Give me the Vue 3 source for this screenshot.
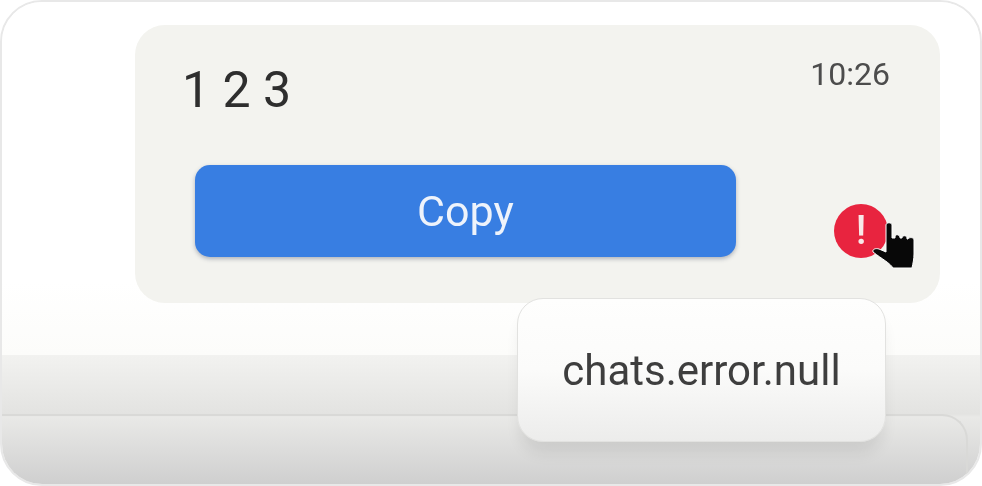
<template>
  <div class="frame">
    <section class="chat">
      <div class="bubble">
        <div class="head">
          <span class="message">1 2 3</span>
          <span class="time">10:26</span>
        </div>
        <div class="actions">
          <button class="copy">Copy</button>
          <span class="error">!</span>
        </div>
        <svg class="cursor" width="50" height="54" viewBox="0 0 50 54">
          <path d="M16 6c0-3 6-3 6 0v13h3v-1c0-3 4-3 5 0v1h2c0-3 5-3 5 0v1h1c1-2 6-2 6 1v14c0 5-1 9-2 14H23c-3-5-11-9-20-16-1-3 3-4 6-3l7 3z" fill="#080808" stroke="#fff" stroke-width="1" />
        </svg>
      </div>
    </section>
    <section class="composer">
      <div class="input"></div>
    </section>
    <div class="tooltip"><span class="tip-text">chats.error.null</span></div>
  </div>
</template>

<script setup>
</script>

<style>
html,
body {
  background: #fff;
}
</style>

<style scoped>
.frame {
  position: relative;
  box-sizing: border-box;
  width: 982px;
  height: 486px;
  display: flex;
  flex-direction: column;
  overflow: hidden;
  border: 2px solid #e8e8e8;
  border-radius: 42px;
  font-family: Roboto, "Liberation Sans", sans-serif;
}

.chat {
  box-sizing: border-box;
  height: 353px;
  padding: 23px 40px 0 133px;
  background: linear-gradient(#fff, #fff 280px, #fcfcfa);
}

.bubble {
  position: relative;
  box-sizing: border-box;
  height: 278px;
  padding: 36px 50px 0 47px;
  background: #f3f3ef;
  border-radius: 30px;
  filter: blur(0.7px);
}

.head {
  display: flex;
  justify-content: space-between;
  align-items: flex-start;
}

.message {
  font-size: 50px;
  line-height: 58px;
  color: #2e2e2e;
}

.time {
  margin-top: -5px;
  font-size: 32px;
  line-height: 36px;
  color: #4c4c4c;
}

.actions {
  display: flex;
  align-items: flex-end;
  margin-top: 46px;
  margin-left: 13px;
}

.copy {
  width: 541px;
  height: 92px;
  border: none;
  border-radius: 15px;
  background: #387ee2;
  box-shadow: 0 2px 4px rgba(50, 60, 90, 0.35);
  color: #eef3fb;
  font-family: inherit;
  font-size: 43px;
}

.error {
  width: 54px;
  height: 54px;
  margin-left: 98px;
  margin-bottom: -1px;
  border-radius: 50%;
  background: #e8243f;
  color: #f8e8e8;
  font-size: 40px;
  font-weight: 500;
  line-height: 54px;
  text-align: center;
}

.cursor {
  position: absolute;
  left: 735px;
  top: 194px;
}

.composer {
  flex: 1;
  display: flex;
  flex-direction: column;
  padding-top: 59px;
  padding-right: 12px;
  background: linear-gradient(#f2f2f0, #e3e3e1 59px, #e9e9e7 62px, #cfcfcf);
}

.input {
  flex: 1;
  border-top: 2px solid #d9d9d7;
  border-right: 2px solid #d9d9d7;
  border-top-right-radius: 26px;
}

.tooltip {
  position: absolute;
  left: 515px;
  top: 296px;
  box-sizing: border-box;
  width: 369px;
  height: 144px;
  display: flex;
  align-items: center;
  justify-content: center;
  border: 1px solid #e2e2e0;
  border-radius: 26px;
  background: linear-gradient(#fefefd, #fbfbfa 50%, #ececeb);
  box-shadow: 0 14px 16px -4px rgba(0, 0, 0, 0.09);
  color: #3e3e3e;
  font-size: 42px;
}

.tip-text {
  filter: blur(0.7px);
}
</style>
